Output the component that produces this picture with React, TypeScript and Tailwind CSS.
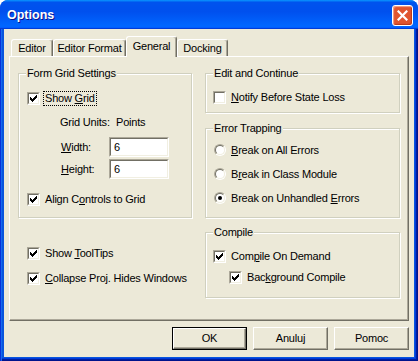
import type { ReactNode } from 'react';

const sunkenOuter = 'border border-t-[#ACA899] border-l-[#ACA899] border-r-white border-b-white';
const sunkenInner = 'border border-t-[#716F64] border-l-[#716F64] border-r-[#F1EFE2] border-b-[#F1EFE2]';

function U({ children }: { children: ReactNode }) {
    return <span className="underline underline-offset-[1px]">{children}</span>;
}

function Check({ checked }: { checked?: boolean }) {
    return (
        <span className={`w-[13px] h-[13px] shrink-0 flex ${sunkenOuter}`}>
            <span className={`flex-1 bg-white ${sunkenInner}`}>
                {checked && (
                    <svg width="9" height="9" viewBox="0 0 9 9" className="block" shapeRendering="crispEdges">
                        <path d="M1 3h1v3H1zM2 4h1v3H2zM3 5h1v3H3zM4 4h1v3H4zM5 3h1v3H5zM6 2h1v3H6zM7 1h1v3H7z" fill="#000" />
                    </svg>
                )}
            </span>
        </span>
    );
}

function Radio({ on }: { on?: boolean }) {
    return (
        <span className={`w-[12px] h-[12px] shrink-0 rounded-full flex ${sunkenOuter}`}>
            <span className={`flex-1 rounded-full bg-white flex items-center justify-center ${sunkenInner}`}>
                {on && <span className="w-[4px] h-[4px] rounded-full bg-black" />}
            </span>
        </span>
    );
}

function Label({ children, focus }: { children: ReactNode; focus?: boolean }) {
    return (
        <span className={`ml-[3px] px-[1px] border whitespace-nowrap ${focus ? 'border-dotted border-black' : 'border-transparent'}`}>
            {children}
        </span>
    );
}

function CheckRow({ checked, focus, className = '', children }: { checked?: boolean; focus?: boolean; className?: string; children: ReactNode }) {
    return (
        <div className={`flex items-center h-[13px] ${className}`}>
            <Check checked={checked} />
            <Label focus={focus}>{children}</Label>
        </div>
    );
}

function RadioRow({ on, children }: { on?: boolean; children: ReactNode }) {
    return (
        <div className="flex items-center h-[12px]">
            <Radio on={on} />
            <Label>{children}</Label>
        </div>
    );
}

function Group({ title, className = '', children }: { title: string; className?: string; children: ReactNode }) {
    return (
        <div className={`relative border border-[#D0D0BF] shadow-[1px_1px_0_#fff,inset_1px_1px_0_#fff] ${className}`}>
            <span className="absolute -top-[7px] left-[7px] px-[1px] bg-[#ECE9D8] whitespace-nowrap">{title}</span>
            {children}
        </div>
    );
}

function Field({ value }: { value: string }) {
    return (
        <span className={`w-[60px] h-[20px] flex ${sunkenOuter}`}>
            <span className={`flex-1 bg-white pl-[3px] leading-[16px] ${sunkenInner}`}>{value}</span>
        </span>
    );
}

function Tab({ label, active, w }: { label: string; active?: boolean; w: string }) {
    const edge = 'border-t border-l border-r border-t-white border-l-white border-r-[#716F64] rounded-t-[3px] shadow-[inset_-1px_0_0_#ACA899]';
    if (active)
        return (
            <div className={`${w} ${edge} h-[21px] -mb-[1px] relative z-10 bg-[#ECE9D8] flex items-center justify-center pb-[2px]`}>
                {label}
            </div>
        );
    return <div className={`${w} ${edge} h-[17px] flex items-center justify-center`}>{label}</div>;
}

function Btn({ children, def }: { children: ReactNode; def?: boolean }) {
    return (
        <button className={`w-[75px] h-[23px] flex bg-[#ECE9D8] ${def ? 'border border-black' : ''}`}>
            <span className="flex-1 flex items-center justify-center border border-t-white border-l-white border-r-[#716F64] border-b-[#716F64] shadow-[inset_-1px_-1px_0_#ACA899]">
                {children}
            </span>
        </button>
    );
}

export default function App() {
    return (
        <div className="w-[418px] h-[361px] flex flex-col rounded-t-[8px] overflow-hidden bg-[#0855DD] font-['Liberation_Sans',Arial,sans-serif] text-[11px] leading-[13px] tracking-[-0.2px] text-black">
            <div className="h-[29px] shrink-0 flex items-center justify-between pl-[7px] pr-[5px] pt-[1px] bg-[linear-gradient(180deg,#0997ff,#0053ee_8%,#0050ee_40%,#0066ff_88%,#0066ff_93%,#005bff_95%,#003dd7_96%,#003dd7)]">
                <span className="text-white font-bold text-[12.5px] tracking-normal [text-shadow:1px_1px_0_#0f1089]">Options</span>
                <span className="w-[21px] h-[21px] rounded-[3px] border border-white bg-[#E0552F] shadow-[inset_1px_1px_1px_#f4a58a,inset_-1px_-1px_1px_#b8391a] flex items-center justify-center">
                    <svg width="11" height="11" viewBox="0 0 11 11">
                        <path d="M1.5 1.5l8 8M9.5 1.5l-8 8" stroke="#fff" strokeWidth="2.2" strokeLinecap="square" />
                    </svg>
                </span>
            </div>

            <div className="flex-1 px-[4px] pb-[4px] shadow-[inset_1px_0_0_#0831d9,inset_2px_0_0_#166aee,inset_-1px_-1px_0_#00138c,inset_-2px_-2px_0_#001ea0,inset_-3px_-3px_0_#003bda]">
                <div className="h-full bg-[#ECE9D8] flex flex-col px-[5px] pt-[7px]">
                    <div className="flex items-end h-[20px] pl-[2px]">
                        <Tab w="w-[42px]" label="Editor" />
                        <Tab w="w-[73px]" label="Editor Format" />
                        <Tab w="w-[51px]" label="General" active />
                        <Tab w="w-[51px]" label="Docking" />
                    </div>

                    <div className="h-[265px] border border-t-white border-l-white border-r-[#716F64] border-b-[#716F64] shadow-[inset_-1px_-1px_0_#ACA899] pt-[16px] pl-[8px]">
                        <div className="flex gap-[13px]">
                            <div className="w-[174px] flex flex-col">
                                <Group title="Form Grid Settings" className="h-[145px] flex flex-col pl-[8px]">
                                    <CheckRow checked focus className="mt-[18px]">
                                        Show <U>G</U>rid
                                    </CheckRow>
                                    <div className="flex mt-[11px] ml-[33px]">
                                        <span className="w-[56px]">Grid Units:</span>
                                        <span>Points</span>
                                    </div>
                                    <div className="flex items-center h-[20px] mt-[8px] ml-[34px]">
                                        <span className="w-[48px]">
                                            <U>W</U>idth:
                                        </span>
                                        <Field value="6" />
                                    </div>
                                    <div className="flex items-center h-[20px] mt-[2px] ml-[34px]">
                                        <span className="w-[48px]">
                                            <U>H</U>eight:
                                        </span>
                                        <Field value="6" />
                                    </div>
                                    <CheckRow checked className="mt-[14px]">
                                        Align C<U>o</U>ntrols to Grid
                                    </CheckRow>
                                </Group>
                                <div className="pl-[9px] flex flex-col">
                                    <CheckRow checked className="mt-[29px]">
                                        Show <U>T</U>oolTips
                                    </CheckRow>
                                    <CheckRow checked className="mt-[12px]">
                                        <U>C</U>ollapse Proj. Hides Windows
                                    </CheckRow>
                                </div>
                            </div>

                            <div className="w-[195px] flex flex-col">
                                <Group title="Edit and Continue" className="h-[40px] pl-[7px] pt-[17px]">
                                    <CheckRow>
                                        <U>N</U>otify Before State Loss
                                    </CheckRow>
                                </Group>
                                <Group title="Error Trapping" className="h-[90px] mt-[15px] pl-[8px] pt-[15px] flex flex-col gap-[12px]">
                                    <RadioRow>
                                        <U>B</U>reak on All Errors
                                    </RadioRow>
                                    <RadioRow>
                                        B<U>r</U>eak in Class Module
                                    </RadioRow>
                                    <RadioRow on>
                                        Break on Unhandled <U>E</U>rrors
                                    </RadioRow>
                                </Group>
                                <Group title="Compile" className="h-[66px] mt-[14px] pl-[7px] pt-[17px] flex flex-col">
                                    <CheckRow checked>
                                        Com<U>p</U>ile On Demand
                                    </CheckRow>
                                    <CheckRow checked className="mt-[8px] ml-[16px]">
                                        Bac<U>k</U>ground Compile
                                    </CheckRow>
                                </Group>
                            </div>
                        </div>
                    </div>

                    <div className="flex justify-end gap-[6px] mt-[6px]">
                        <Btn def>OK</Btn>
                        <Btn>Anuluj</Btn>
                        <Btn>Pomoc</Btn>
                    </div>
                </div>
            </div>
        </div>
    );
}
